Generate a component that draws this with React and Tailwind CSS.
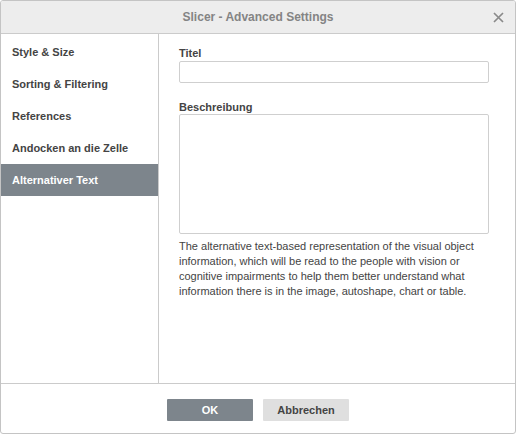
import React from 'react'

const tabs = ['Style & Size', 'Sorting & Filtering', 'References', 'Andocken an die Zelle', 'Alternativer Text']

const App = () => {
    const active = 4

    return (
        <div className="w-[516px] h-[434px] bg-white">
            <div className="w-full h-full flex flex-col border border-[#c4c4c4] rounded-[3px] overflow-hidden font-['Liberation_Sans',Arial,sans-serif] text-[11px] text-[#444]">

                {/* Header */}
                <div className="relative h-[33px] shrink-0 flex items-center justify-center bg-[#ededed] border-b border-[#cbcbcb]">
                    <span className="text-[12px] font-bold text-[#848484]">Slicer - Advanced Settings</span>
                    <svg className="absolute right-[11px] top-[11px] w-[11px] h-[11px]" viewBox="0 0 11 11">
                        <path d="M1 1L10 10M10 1L1 10" stroke="#8a8a8a" strokeWidth="1.7" fill="none" />
                    </svg>
                </div>

                {/* Body */}
                <div className="flex flex-1 min-h-0">
                    {/* Sidebar */}
                    <div className="w-[158px] shrink-0 border-r border-[#cbcbcb] pt-[2px]">
                        {tabs.map((t, i) => (
                            <div
                                key={t}
                                className={
                                    i === active
                                        ? 'h-[32px] flex items-center pl-[11px] bg-[#7d858c] text-white font-bold'
                                        : 'h-[32px] flex items-center pl-[11px] text-[#444] font-bold'
                                }
                            >
                                {t}
                            </div>
                        ))}
                    </div>

                    {/* Content */}
                    <div className="flex-1 pt-[12px] pl-[20px]">
                        <div className="leading-[14px] mb-[1px] font-bold">Titel</div>
                        <div className="w-[310px] h-[22px] border border-[#cfcfcf] rounded-[2px]"></div>

                        <div className="leading-[14px] mt-[17px] font-bold">Beschreibung</div>
                        <div className="w-[310px] h-[120px] border border-[#cfcfcf] rounded-[2px]"></div>

                        <p className="w-[310px] mt-[5px] leading-[15px]">
                            The alternative text-based representation of the visual object information, which will be read to the people with vision or cognitive impairments to help them better understand what information there is in the image, autoshape, chart or table.
                        </p>
                    </div>
                </div>

                {/* Footer */}
                <div className="h-[50px] shrink-0 border-t border-[#cbcbcb] flex justify-center gap-[10px] pt-[15px]">
                    <button className="w-[86px] h-[22px] rounded-[1px] bg-[#7d858c] text-white font-bold">OK</button>
                    <button className="w-[86px] h-[22px] rounded-[1px] bg-[#dfdfdf] text-[#444] font-bold">Abbrechen</button>
                </div>
            </div>
        </div>
    )
}

export default App
